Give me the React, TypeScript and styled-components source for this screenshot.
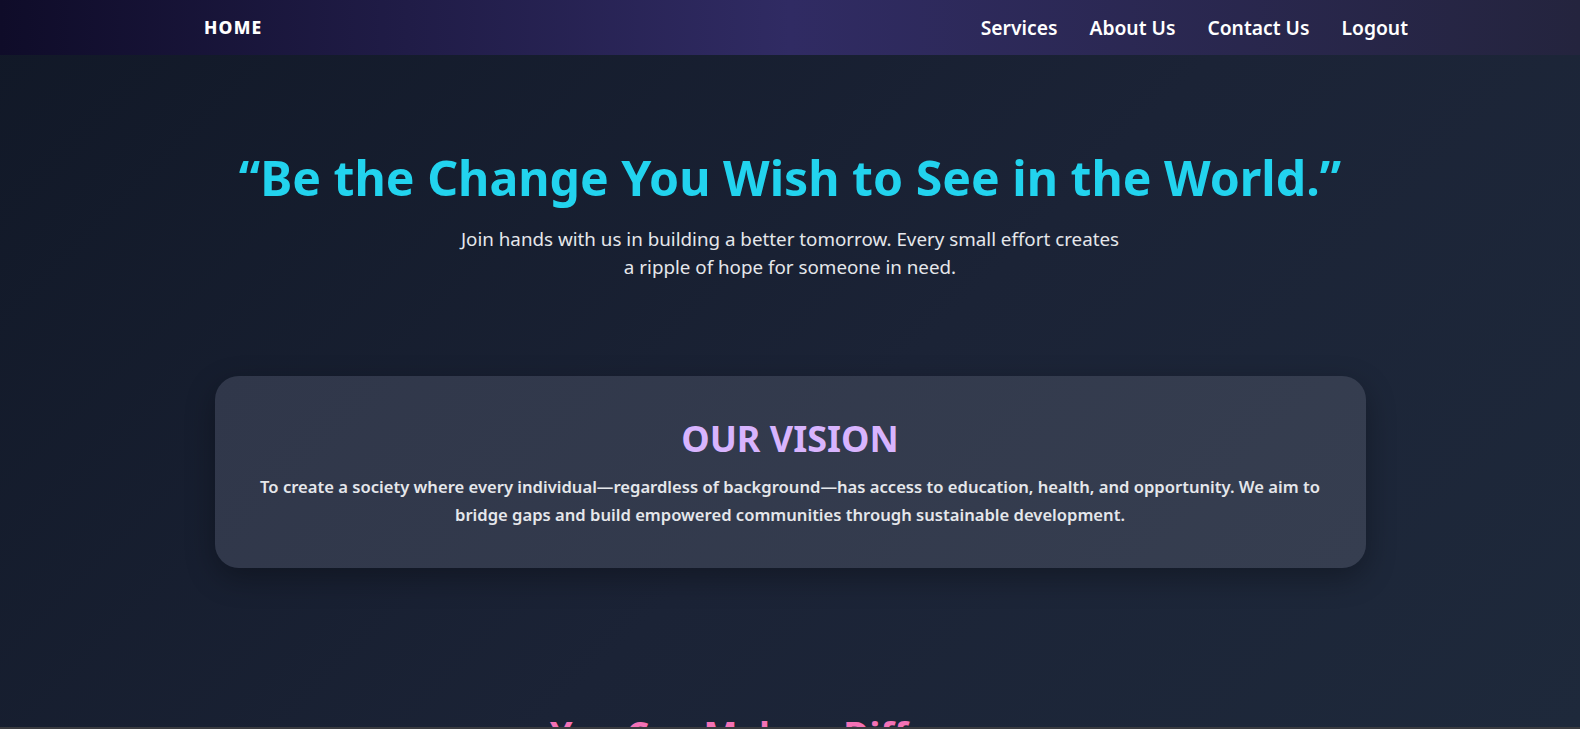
import React from "react";
import styled, { createGlobalStyle } from "styled-components";

const Global = createGlobalStyle`
  html, body { margin: 0; padding: 0; }
  body {
    font-family: "Noto Sans", "Open Sans", sans-serif;
    background: linear-gradient(135deg, #111827 0%, #1b2336 55%, #1e293b 100%);
    background-attachment: fixed;
    min-height: 100vh;
    color: #fff;
    overflow: hidden;
  }
`;

const Page = styled.div`
  min-height: 100vh;
  display: flex;
  flex-direction: column;
`;

const NavBar = styled.nav`
  height: 55px;
  background: linear-gradient(to right, #0f0c29, #302b63, #24243e);
  display: flex;
  align-items: center;
  justify-content: space-between;
  padding: 0 172px 0 204px;
  box-sizing: border-box;
`;

const Brand = styled.a`
  font-size: 17.5px;
  font-weight: 800;
  color: #fff;
  text-decoration: none;
  letter-spacing: 1.2px;
  margin-top: -2px;
`;

const NavLinks = styled.ul`
  list-style: none;
  display: flex;
  gap: 32px;
  margin: 0;
  padding: 0;
`;

const NavLink = styled.a`
  font-size: 19.3px;
  font-weight: 600;
  color: #fff;
  text-decoration: none;
`;

const Hero = styled.section`
  display: flex;
  flex-direction: column;
  align-items: center;
  text-align: center;
  padding: 94px 20px 0;
`;

const Quote = styled.h1`
  margin: 0;
  font-size: 48.2px;
  font-weight: 700;
  color: #22d3ee;
  line-height: 1.2;
`;

const Lead = styled.p`
  margin: 18px 0 0;
  font-size: 18.8px;
  line-height: 28px;
  color: #e5e7eb;
`;

const VisionCard = styled.section`
  align-self: center;
  width: 1151px;
  box-sizing: border-box;
  margin-top: 95px;
  padding: 41px 30px 39px;
  border-radius: 24px;
  background: linear-gradient(135deg, #30374a, #363e50);
  box-shadow: 0 10px 30px rgba(0, 0, 0, 0.3);
  text-align: center;
`;

const SectionTitle = styled.h2<{ $color: string }>`
  margin: 0;
  font-size: 36px;
  font-weight: 700;
  line-height: 1.2;
  color: ${(p) => p.$color};
`;

const VisionText = styled.p`
  margin: 13px 0 0;
  font-size: 16.6px;
  font-weight: 600;
  line-height: 28px;
  color: #e5e7eb;
`;

const Involve = styled.section`
  margin-top: 145px;
  text-align: center;
`;

const BottomEdge = styled.div`
  position: fixed;
  left: 0;
  right: 0;
  bottom: 0;
  height: 2px;
  background: #3a3b3f;
`;

export default function App() {
  return (
    <>
      <Global />
      <Page>
        <NavBar>
          <Brand href="#">HOME</Brand>
          <NavLinks>
            <li><NavLink href="#">Services</NavLink></li>
            <li><NavLink href="#">About Us</NavLink></li>
            <li><NavLink href="#">Contact Us</NavLink></li>
            <li><NavLink href="#">Logout</NavLink></li>
          </NavLinks>
        </NavBar>
        <Hero>
          <Quote>“Be the Change You Wish to See in the World.”</Quote>
          <Lead>
            Join hands with us in building a better tomorrow. Every small effort creates
            <br />
            a ripple of hope for someone in need.
          </Lead>
        </Hero>
        <VisionCard>
          <SectionTitle $color="#d8b4fe">OUR VISION</SectionTitle>
          <VisionText>
            To create a society where every individual—regardless of background—has access to education, health, and opportunity. We aim to
            <br />
            bridge gaps and build empowered communities through sustainable development.
          </VisionText>
        </VisionCard>
        <Involve>
          <SectionTitle $color="#f472b6">You Can Make a Difference</SectionTitle>
        </Involve>
      </Page>
      <BottomEdge />
    </>
  );
}
